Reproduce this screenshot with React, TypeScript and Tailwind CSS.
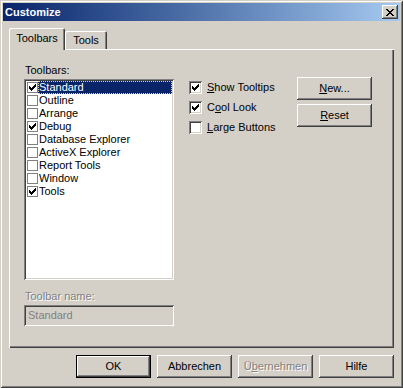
import React from "react";

const TOOLBARS = [
  { name: "Standard", checked: true, selected: true },
  { name: "Outline", checked: false },
  { name: "Arrange", checked: false },
  { name: "Debug", checked: true },
  { name: "Database Explorer", checked: false },
  { name: "ActiveX Explorer", checked: false },
  { name: "Report Tools", checked: false },
  { name: "Window", checked: false },
  { name: "Tools", checked: true },
];

function Check() {
  return (
    <svg width="7" height="7" viewBox="0 0 7 7" shapeRendering="crispEdges">
      <path d="M0 2h1v3H0zM1 3h1v3H1zM2 4h1v3H2zM3 3h1v3H3zM4 2h1v3H4zM5 1h1v3H5zM6 0h1v3H6z" fill="#000" />
    </svg>
  );
}

function CloseGlyph() {
  return (
    <svg width="8" height="7" viewBox="0 0 8 7" shapeRendering="crispEdges">
      <path
        d="M0 0h2v1H0zM6 0h2v1H6zM1 1h2v1H1zM5 1h2v1H5zM2 2h4v1H2zM3 3h2v1H3zM2 4h4v1H2zM1 5h2v1H1zM5 5h2v1H5zM0 6h2v1H0zM6 6h2v1H6z"
        fill="#000"
      />
    </svg>
  );
}

function Button({ children, isDefault, disabled }: { children: React.ReactNode; isDefault?: boolean; disabled?: boolean }) {
  return (
    <button
      className={`flex h-[23px] w-[75px] items-center justify-center bg-[#d4d0c8] ${
        isDefault
          ? "shadow-[inset_0_0_0_1px_#000,inset_-2px_-2px_#404040,inset_2px_2px_#fff,inset_-3px_-3px_#808080]"
          : "shadow-[inset_-1px_-1px_#404040,inset_1px_1px_#fff,inset_-2px_-2px_#808080]"
      } ${disabled ? "text-[#808080] [text-shadow:1px_1px_#fff]" : "text-black"}`}
    >
      {children}
    </button>
  );
}

function SideCheck({ checked, children }: { checked: boolean; children: React.ReactNode }) {
  return (
    <div className="flex h-[20px] items-center">
      <span className="flex h-[13px] w-[13px] items-center justify-center bg-white shadow-[inset_1px_1px_#808080,inset_-1px_-1px_#fff,inset_2px_2px_#404040,inset_-2px_-2px_#d4d0c8]">
        {checked && <Check />}
      </span>
      <span className="ml-[5px]">{children}</span>
    </div>
  );
}

export default function App() {
  return (
    <div className="flex h-[388px] w-[403px] flex-col bg-[#d4d0c8] p-[3px] font-['Liberation_Sans',Arial,sans-serif] text-[11px] leading-[13px] text-black shadow-[inset_1px_1px_#d4d0c8,inset_-1px_-1px_#404040,inset_2px_2px_#fff,inset_-2px_-2px_#808080]">
      {/* title bar */}
      <div className="flex h-[18px] items-center bg-linear-to-r from-[#0a246a] to-[#a6caf0] px-[2px]">
        <span className="font-bold text-white">Customize</span>
        <button className="ml-auto flex h-[14px] w-[16px] items-center justify-center bg-[#d4d0c8] shadow-[inset_-1px_-1px_#404040,inset_1px_1px_#fff,inset_-2px_-2px_#808080]">
          <CloseGlyph />
        </button>
      </div>

      <div className="flex flex-1 flex-col px-[6px] pt-[7px]">
        {/* tabs */}
        <div className="flex h-[21px] items-end">
          <div className="relative z-10 -mb-px flex h-[22px] w-[56px] justify-center rounded-t-[2px] bg-[#d4d0c8] pt-[4px] shadow-[inset_1px_1px_#fff,inset_-1px_0_#404040,inset_-2px_0_#808080]">
            Toolbars
          </div>
          <div className="flex h-[18px] w-[42px] justify-center rounded-t-[2px] pt-[3px] shadow-[inset_1px_1px_#fff,inset_-1px_0_#404040,inset_-2px_0_#808080]">
            Tools
          </div>
        </div>

        {/* tab page */}
        <div className="flex h-[299px] w-[385px] pl-[15px] pt-[15px] shadow-[inset_1px_1px_#fff,inset_-1px_-1px_#404040,inset_-2px_-2px_#808080]">
          <div className="flex w-[150px] flex-col">
            <div className="mb-[2px] h-[13px] pl-[1px]">Toolbars:</div>
            <div className="h-[201px] bg-white p-[2px] shadow-[inset_1px_1px_#808080,inset_-1px_-1px_#fff,inset_2px_2px_#404040,inset_-2px_-2px_#d4d0c8]">
              {TOOLBARS.map((t) => (
                <div key={t.name} className="flex h-[13px] items-center">
                  <span className="ml-[1px] flex h-[11px] w-[11px] shrink-0 items-center justify-center border border-[#808080] bg-white">
                    {t.checked && <Check />}
                  </span>
                  <span
                    className={`h-[13px] flex-1 pl-[1px] ${
                      t.selected
                        ? "bg-[#0a246a] text-white outline-1 -outline-offset-1 outline-dotted outline-[#e9d9a0]"
                        : ""
                    }`}
                  >
                    {t.name}
                  </span>
                </div>
              ))}
            </div>
            <div className="mt-[10px] h-[13px] pl-[1px] text-[#808080] [text-shadow:1px_1px_#fff]">Toolbar name:</div>
            <div className="mt-[2px] flex h-[21px] items-center pl-[4px] text-[#808080] shadow-[inset_1px_1px_#808080,inset_-1px_-1px_#fff,inset_2px_2px_#404040,inset_-2px_-2px_#d4d0c8]">
              Standard
            </div>
          </div>

          <div className="ml-[15px] mt-[13px] flex w-[108px] flex-col">
            <SideCheck checked>
              <u>S</u>how Tooltips
            </SideCheck>
            <SideCheck checked>
              C<u>o</u>ol Look
            </SideCheck>
            <SideCheck checked={false}>
              <u>L</u>arge Buttons
            </SideCheck>
          </div>

          <div className="mt-[13px] flex flex-col gap-[4px]">
            <Button>
              <span>
                <u>N</u>ew...
              </span>
            </Button>
            <Button>
              <span>
                <u>R</u>eset
              </span>
            </Button>
          </div>
        </div>

        {/* dialog buttons */}
        <div className="mt-[7px] flex justify-end gap-[6px]">
          <Button isDefault>OK</Button>
          <Button>Abbrechen</Button>
          <Button disabled>
            <span>
              Ü<u>b</u>ernehmen
            </span>
          </Button>
          <Button>Hilfe</Button>
        </div>
      </div>
    </div>
  );
}
